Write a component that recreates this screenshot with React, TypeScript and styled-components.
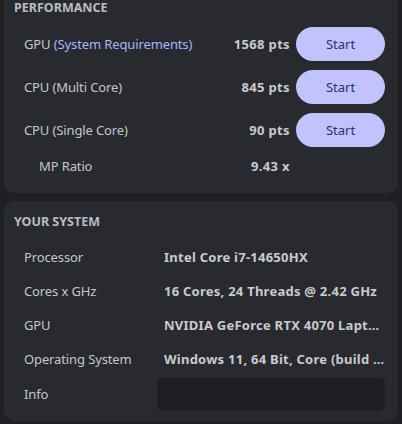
import React from "react";
import styled, { createGlobalStyle } from "styled-components";

const Global = createGlobalStyle`
  html, body { margin: 0; padding: 0; background: #1f2023; overflow: hidden; }
  body { font-family: "Noto Sans", "Open Sans", sans-serif; }
`;

const Page = styled.div`
  height: 424px;
  padding: 0 4px;
  box-sizing: border-box;
  display: flex;
  flex-direction: column;
  gap: 8px;
`;

const Panel = styled.section<{ $offset?: number; $padBottom: number }>`
  background: #292a2f;
  border-radius: 10px;
  margin-top: ${(p) => p.$offset ?? 0}px;
  padding: 12px 13px ${(p) => p.$padBottom}px 10px;
  display: flex;
  flex-direction: column;
`;

const Heading = styled.h2<{ $mb: number }>`
  margin: 0 0 ${(p) => p.$mb}px 0;
  font-size: 12.5px;
  line-height: 18px;
  font-weight: 700;
  color: #b9bcc3;
`;

const PerfList = styled.div`
  display: flex;
  flex-direction: column;
  gap: 9px;
`;

const PerfRow = styled.div`
  display: grid;
  grid-template-columns: 1fr auto 89px;
  align-items: center;
  column-gap: 6px;
  height: 34px;
  padding-left: 10px;
`;

const RatioRow = styled.div`
  display: grid;
  grid-template-columns: 1fr auto 89px;
  align-items: center;
  column-gap: 6px;
  height: 18px;
  margin-top: 10px;
  padding-left: 25px;
`;

const Label = styled.span`
  font-size: 13px;
  color: #c4c7cd;
  letter-spacing: -0.12px;
  white-space: nowrap;
`;

const Accent = styled.span`
  color: #a9b3ff;
`;

const Score = styled.span`
  font-size: 13px;
  font-weight: 700;
  color: #c9cacd;
  letter-spacing: 0.35px;
  text-align: right;
  white-space: nowrap;
`;

const StartButton = styled.button`
  height: 34px;
  border: none;
  border-radius: 17px;
  background: #c0c3ff;
  color: #283070;
  font-family: inherit;
  font-size: 13px;
  padding: 0;
  cursor: pointer;
`;

const SysRow = styled.div<{ $shift?: number }>`
  display: grid;
  grid-template-columns: 133px 1fr;
  align-items: center;
  height: 34px;
  padding-left: 10px;
  margin-top: ${(p) => p.$shift ?? 0}px;
`;

const Value = styled.span`
  font-size: 13px;
  font-weight: 700;
  color: #c9cacd;
  letter-spacing: 0.25px;
  white-space: nowrap;
  overflow: hidden;
  text-overflow: ellipsis;
  padding-left: 7px;
`;

const InfoBox = styled.div`
  height: 34px;
  background: #1d1e21;
  border: 1px solid #222327;
  border-radius: 5px;
  box-sizing: border-box;
`;

const perf = [
  { label: <>GPU <Accent>(System Requirements)</Accent></>, score: "1568 pts" },
  { label: <>CPU (Multi Core)</>, score: "845 pts" },
  { label: <>CPU (Single Core)</>, score: "90 pts" },
];

const sys = [
  ["Processor", "Intel Core i7-14650HX"],
  ["Cores x GHz", "16 Cores, 24 Threads @ 2.42 GHz"],
  ["GPU", "NVIDIA GeForce RTX 4070 Laptop GPU"],
  ["Operating System", "Windows 11, 64 Bit, Core (build 26100)"],
];

export default function App() {
  return (
    <>
      <Global />
      <Page>
        <Panel $offset={-13} $padBottom={18}>
          <Heading $mb={10}>PERFORMANCE</Heading>
          <PerfList>
            {perf.map((r, i) => (
              <PerfRow key={i}>
                <Label>{r.label}</Label>
                <Score>{r.score}</Score>
                <StartButton>Start</StartButton>
              </PerfRow>
            ))}
          </PerfList>
          <RatioRow>
            <Label>MP Ratio</Label>
            <Score>9.43 x</Score>
            <span />
          </RatioRow>
        </Panel>
        <Panel $padBottom={10}>
          <Heading $mb={9}>YOUR SYSTEM</Heading>
          {sys.map(([k, v]) => (
            <SysRow key={k}>
              <Label>{k}</Label>
              <Value>{v}</Value>
            </SysRow>
          ))}
          <SysRow $shift={1}>
            <Label>Info</Label>
            <InfoBox />
          </SysRow>
        </Panel>
      </Page>
    </>
  );
}
